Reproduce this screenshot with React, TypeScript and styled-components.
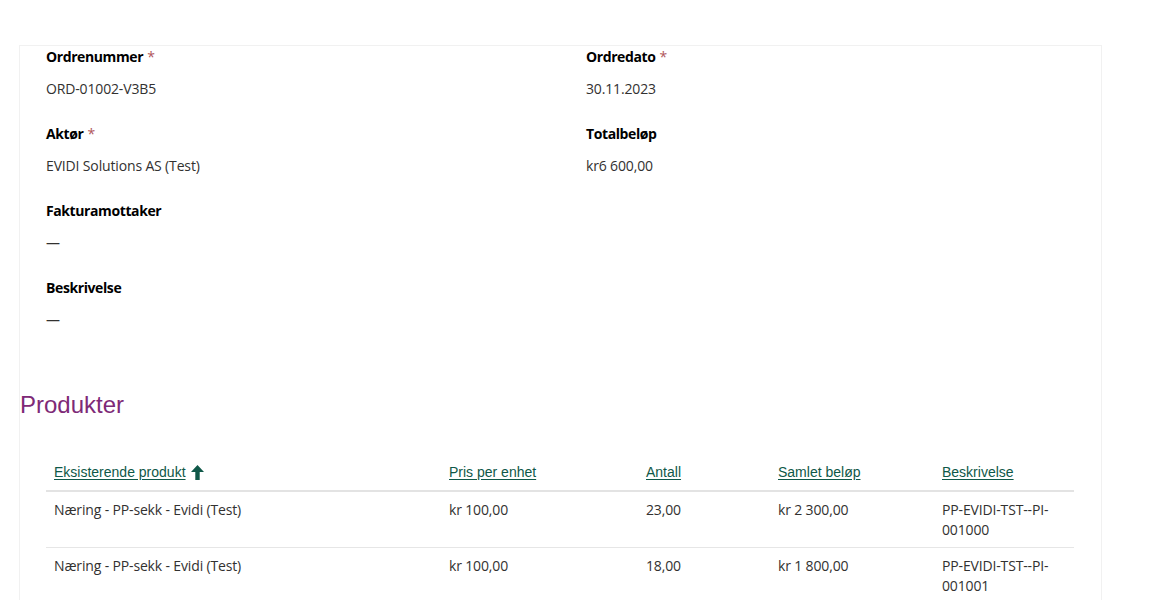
import styled, { createGlobalStyle } from "styled-components";

const GlobalStyle = createGlobalStyle`
  body {
    margin: 0;
    background: #ffffff;
    font-family: "Open Sans", "Noto Sans", sans-serif;
  }
`;

const Page = styled.div`
  padding: 45px 51px 0 19px;
  height: 600px;
  box-sizing: border-box;
  overflow: hidden;
`;

const Card = styled.section`
  border: 1px solid #f1f1f1;
  border-bottom: none;
  min-height: 600px;
`;

const FieldGrid = styled.div`
  display: grid;
  grid-template-columns: 540px 1fr;
  row-gap: 25px;
  padding: 1px 26px 0 26px;
`;

const Field = styled.div`
  display: flex;
  flex-direction: column;
  gap: 12px;
`;

const Label = styled.div`
  font-size: 14px;
  font-weight: 700;
  letter-spacing: -0.4px;
  line-height: 20px;
  color: #000000;
`;

const Required = styled.span`
  color: #b0565b;
  font-weight: 400;
  margin-left: 4px;
`;

const Value = styled.div`
  font-size: 14px;
  line-height: 20px;
  letter-spacing: -0.15px;
  color: #323130;
`;

const Heading = styled.h2`
  margin: 60px 0 0 0;
  font-family: "Liberation Sans", Arial, sans-serif;
  font-weight: 400;
  font-size: 24px;
  line-height: 30px;
  color: #7e2a77;
`;

const TableWrap = styled.div`
  padding: 34px 26px 0 26px;
`;

const Table = styled.table`
  width: 1028px;
  border-collapse: collapse;
  table-layout: fixed;
`;

const HeadCell = styled.th<{ $w: number }>`
  box-sizing: border-box;
  width: ${(p) => p.$w}px;
  text-align: left;
  font-weight: 400;
  padding: 8px 8px;
  border-bottom: 2px solid #e3e3e3;
  font-family: "Liberation Sans", Arial, sans-serif;
  font-size: 14px;
  line-height: 20px;
`;

const SortLink = styled.a`
  color: #0f5848;
  text-decoration: underline;
  text-underline-offset: 2px;
  display: inline-flex;
  align-items: center;
  gap: 5px;
  cursor: pointer;
`;

const Row = styled.tr`
  border-bottom: 1px solid #e6e6e6;
`;

const Cell = styled.td`
  padding: 8px 8px 7px 8px;
  vertical-align: top;
  font-size: 14px;
  line-height: 20px;
  letter-spacing: -0.15px;
  color: #323130;
`;

const ArrowUp = () => (
  <svg width="13" height="15" viewBox="0 0 13 15" aria-hidden>
    <path d="M6.5 0 L13 7 H8.7 V15 H4.3 V7 H0 Z" fill="#0f5848" />
  </svg>
);

const fields = [
  { label: "Ordrenummer", required: true, value: "ORD-01002-V3B5" },
  { label: "Ordredato", required: true, value: "30.11.2023" },
  { label: "Aktør", required: true, value: "EVIDI Solutions AS (Test)" },
  { label: "Totalbeløp", required: false, value: "kr6 600,00" },
  { label: "Fakturamottaker", required: false, value: "—" },
  { label: "", required: false, value: "" },
  { label: "Beskrivelse", required: false, value: "—" },
];

const columns = [
  { name: "Eksisterende produkt", w: 395, sorted: true },
  { name: "Pris per enhet", w: 197 },
  { name: "Antall", w: 132 },
  { name: "Samlet beløp", w: 164 },
  { name: "Beskrivelse", w: 140 },
];

const products = [
  ["Næring - PP-sekk - Evidi (Test)", "kr 100,00", "23,00", "kr 2 300,00", "PP-EVIDI-TST--PI-001000"],
  ["Næring - PP-sekk - Evidi (Test)", "kr 100,00", "18,00", "kr 1 800,00", "PP-EVIDI-TST--PI-001001"],
];

export default function App() {
  return (
    <>
      <GlobalStyle />
      <Page>
        <Card>
          <FieldGrid>
            {fields.map((f, i) =>
              f.label ? (
                <Field key={f.label}>
                  <Label>
                    {f.label}
                    {f.required && <Required>*</Required>}
                  </Label>
                  <Value>{f.value}</Value>
                </Field>
              ) : (
                <div key={i} />
              )
            )}
          </FieldGrid>
          <Heading>Produkter</Heading>
          <TableWrap>
            <Table>
              <thead>
                <tr>
                  {columns.map((c) => (
                    <HeadCell key={c.name} $w={c.w}>
                      <SortLink>
                        {c.name}
                        {c.sorted && <ArrowUp />}
                      </SortLink>
                    </HeadCell>
                  ))}
                </tr>
              </thead>
              <tbody>
                {products.map((p, i) => (
                  <Row key={i}>
                    {p.map((v, j) => (
                      <Cell key={j}>{v}</Cell>
                    ))}
                  </Row>
                ))}
              </tbody>
            </Table>
          </TableWrap>
        </Card>
      </Page>
    </>
  );
}
